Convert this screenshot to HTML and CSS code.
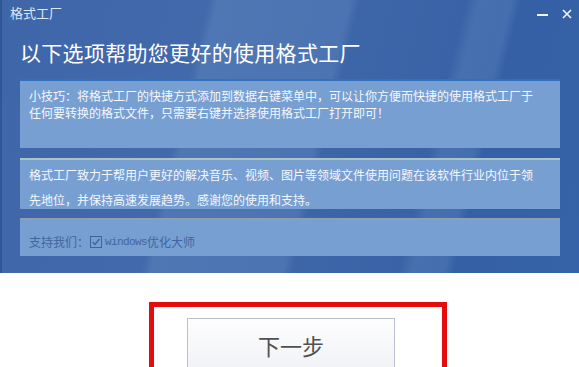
FILE: index.html
```html
<!DOCTYPE html>
<html lang="zh-CN">
<head>
<meta charset="utf-8">
<title>格式工厂</title>
<link rel="stylesheet" href="styles.css">
</head>
<body>
<div class="window">
  <div class="header">
    <div class="titlebar">
      <span class="app-name">格式工厂</span>
      <div class="controls">
        <span class="ctl ctl-min"></span>
        <svg class="ctl-close" width="10" height="10" viewBox="0 0 10 10"><path d="M1 1 L9 9 M9 1 L1 9" stroke="#f2f5fa" stroke-width="1.6" fill="none"/></svg>
      </div>
    </div>
    <h1 class="headline">以下选项帮助您更好的使用格式工厂</h1>
    <div class="panel panel-tip">
      <p>小技巧：将格式工厂的快捷方式添加到数据右键菜单中，可以让你方便而快捷的使用格式工厂于任何要转换的格式文件，只需要右键并选择使用格式工厂打开即可！</p>
    </div>
    <div class="panel panel-about">
      <p>格式工厂致力于帮用户更好的解决音乐、视频、图片等领域文件使用问题在该软件行业内位于领先地位，并保持高速发展趋势。感谢您的使用和支持。</p>
    </div>
    <div class="panel panel-support">
      <span>支持我们：</span>
      <svg class="check" width="12" height="12" viewBox="0 0 12 12"><rect x="0.5" y="0.5" width="11" height="11" fill="none" stroke="#3f639d" stroke-width="1"/><path d="M2.5 6 L5 8.5 L9.5 3" fill="none" stroke="#3f639d" stroke-width="1.4"/></svg>
      <span class="latin">windows</span><span>优化大师</span>
    </div>
  </div>
  <div class="footer">
    <div class="highlight">
      <button class="next">下一步</button>
    </div>
  </div>
</div>
</body>
</html>
```
FILE: styles.css
```css
* { box-sizing: border-box; }
html, body { margin: 0; padding: 0; background: #ffffff; }
body { font-family: "Noto Sans CJK SC", "Noto Sans", sans-serif; }

.window {
  width: 579px;
  height: 367px;
  overflow: hidden;
  display: flex;
  flex-direction: column;
}

.header {
  height: 273px;
  flex: none;
  border-left: 2px solid #2f5696;
  padding-left: 18px;
  background:
    linear-gradient(104deg,
      #3e66a9 0%, #4169ab 32%, #4f77b4 33.5%, #4d74b2 54%, #3d66a9 55.5%,
      #3a63a7 72%, #4770b0 74%, #446eae 79%, #3560a6 80.5%, #3562a8 100%);
  display: flex;
  flex-direction: column;
}

.titlebar {
  height: 30px;
  display: flex;
  align-items: flex-start;
  justify-content: space-between;
  margin-left: -10px;
}
.app-name {
  font-size: 13px;
  line-height: 26px;
  color: #dfe7f4;
}
.controls {
  display: flex;
  align-items: center;
  gap: 14px;
  padding-top: 9px;
  padding-right: 7px;
}
.ctl-min {
  display: block;
  width: 11px;
  height: 2px;
  background: #f2f5fa;
  margin-top: 1px;
}
.ctl-close { display: block; }

.headline {
  margin: 0;
  height: 46px;
  line-height: 44px;
  font-size: 21px;
  font-weight: normal;
  color: #ffffff;
  letter-spacing: 0.3px;
}

.panel {
  width: 540px;
  margin-top: 10px;
  background: #779fd1;
  color: #f4f7fc;
  font-size: 12px;
  padding-left: 9px;
  padding-right: 20px;
}
.panel p { margin: 0; }

.panel-tip {
  margin-top: 3px;
  height: 69px;
  border-top: 2px solid #3170bd;
  padding-top: 6px;
  line-height: 17px;
}
.panel-about {
  height: 51px;
  border-top: 2px solid #a9c6c4;
  padding-top: 2px;
  line-height: 25px;
}
.panel-support {
  margin-top: 9px;
  height: 38px;
  border-top: 2px solid #909eae;
  padding-top: 8px;
  line-height: 20px;
  color: #41659f;
  display: flex;
  align-items: center;
  align-self: flex-start;
}
.check { margin: 0 3px 0 1px; }
.latin {
  font-family: "Liberation Mono", monospace;
  font-size: 11px;
  letter-spacing: -0.6px;
}

.footer {
  flex: 1;
  background: #ffffff;
  padding-top: 29px;
  padding-left: 149px;
}
.highlight {
  width: 298px;
  height: 80px;
  border: 5px solid #e30d0d;
  padding-top: 11px;
  padding-left: 33px;
}
.next {
  display: block;
  width: 208px;
  height: 60px;
  border: 1px solid #b8c1cd;
  background: linear-gradient(#fdfdfe, #eff1f5);
  font-family: "Noto Sans CJK SC", sans-serif;
  font-size: 22px;
  color: #505050;
  line-height: 30px;
  padding: 0 0 6px 0;
  text-align: center;
}
```
